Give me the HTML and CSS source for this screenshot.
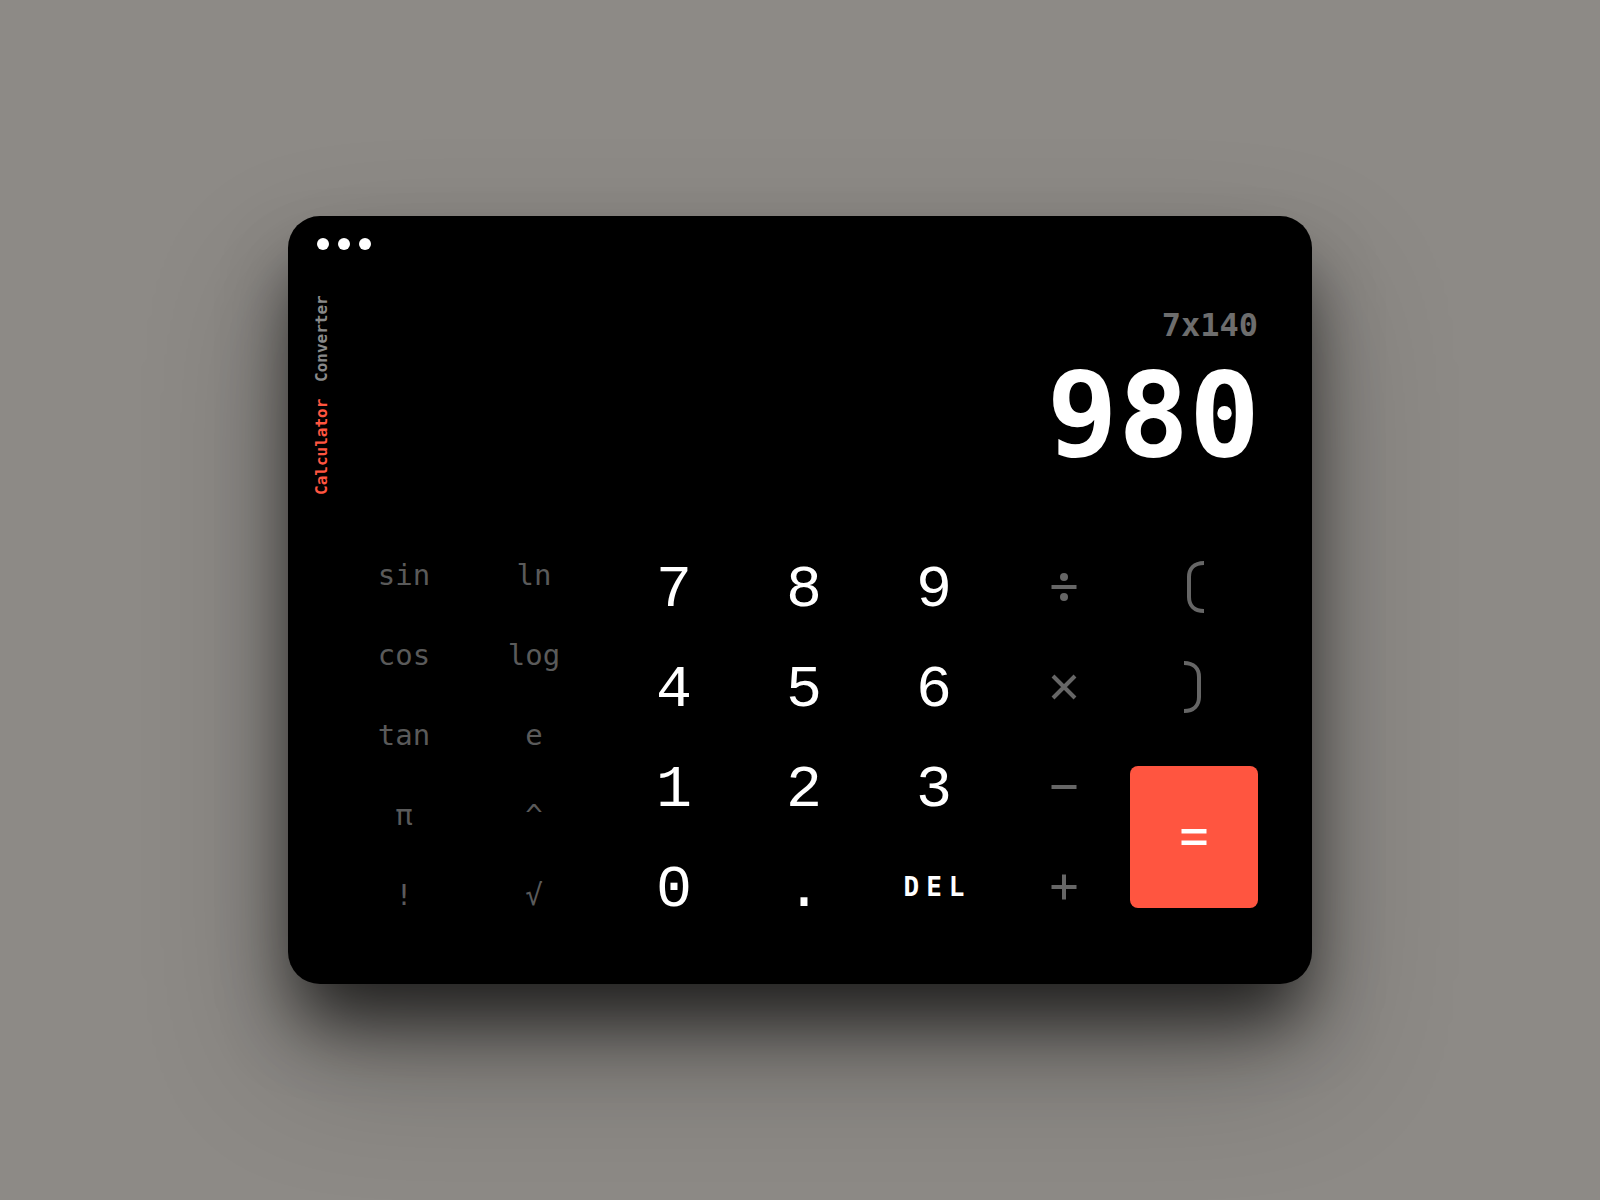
FILE: index.html
```html
<!DOCTYPE html>
<html lang="en">
<head>
<meta charset="utf-8">
<title>Calculator</title>
<link rel="stylesheet" href="styles.css">
</head>
<body>
<div class="card">
  <div class="dots"><span class="dot"></span><span class="dot"></span><span class="dot"></span></div>
  <div class="body">
    <nav class="tabs">
      <span class="tab active">Calculator</span>
      <span class="tab">Converter</span>
    </nav>
    <main class="main">
      <div class="history">7x140</div>
      <div class="result">980</div>
      <div class="keypad">
        <div class="fn">
          <div class="key">sin</div><div class="key">ln</div>
          <div class="key">cos</div><div class="key">log</div>
          <div class="key">tan</div><div class="key">e</div>
          <div class="key">π</div><div class="key">^</div>
          <div class="key">!</div><div class="key">√</div>
        </div>
        <div class="num">
          <div class="key d">7</div><div class="key d">8</div><div class="key d">9</div>
          <div class="key op"><svg width="26" height="30" viewBox="0 0 26 30"><rect x="0.5" y="13" width="25" height="4" fill="#666"/><circle cx="13" cy="5" r="4" fill="#666"/><circle cx="13" cy="25" r="4" fill="#666"/></svg></div>
          <div class="key op paren"><svg width="24" height="54" viewBox="0 0 24 54"><path d="M22 3 C12 3 7 9 7 17 V37 C7 45 12 51 22 51" fill="none" stroke="#666" stroke-width="4"/></svg></div>
          <div class="key d">4</div><div class="key d">5</div><div class="key d">6</div>
          <div class="key op"><svg width="26" height="26" viewBox="0 0 26 26"><path d="M2 2 L24 24 M24 2 L2 24" stroke="#666" stroke-width="4"/></svg></div>
          <div class="key op paren"><svg width="24" height="54" viewBox="0 0 24 54"><path d="M2 3 C12 3 17 9 17 17 V37 C17 45 12 51 2 51" fill="none" stroke="#666" stroke-width="4"/></svg></div>
          <div class="key d">1</div><div class="key d">2</div><div class="key d">3</div>
          <div class="key op"><svg width="26" height="26" viewBox="0 0 26 26"><rect x="0.5" y="11" width="25" height="4" fill="#666"/></svg></div>
          <div class="eq"><svg width="26" height="18" viewBox="0 0 26 18"><rect x="0.5" y="1" width="25" height="4.5" fill="#fff"/><rect x="0.5" y="12.5" width="25" height="4.5" fill="#fff"/></svg></div>
          <div class="key d">0</div><div class="key d">.</div><div class="key del">DEL</div>
          <div class="key op"><svg width="26" height="26" viewBox="0 0 26 26"><rect x="0.5" y="11" width="25" height="4" fill="#666"/><rect x="11" y="0.5" width="4" height="25" fill="#666"/></svg></div>
        </div>
      </div>
    </main>
  </div>
</div>
</body>
</html>
```
FILE: styles.css
```css
html, body {
  margin: 0;
  padding: 0;
}
body {
  background: #8d8a86;
  min-height: 100vh;
  display: flex;
  align-items: center;
  justify-content: center;
  font-family: "DejaVu Sans Mono", "Liberation Mono", monospace;
}
.card {
  width: 1024px;
  box-sizing: border-box;
  padding: 22px 54px 47px 26px;
  background: #000;
  border-radius: 32px;
  box-shadow: 0 45px 70px -10px rgba(0, 0, 0, 0.7), 0 70px 140px rgba(0, 0, 0, 0.28);
}
.dots {
  display: flex;
  gap: 9px;
  margin-left: 3px;
  height: 12px;
}
.dot {
  width: 12px;
  height: 12px;
  border-radius: 50%;
  background: #fff;
}
.body {
  display: flex;
  gap: 10px;
}
.tabs {
  width: 16px;
  height: 200px;
  margin-top: 45px;
  writing-mode: vertical-rl;
  transform: rotate(180deg);
  display: flex;
  justify-content: space-between;
  align-self: flex-start;
  font-size: 16px;
  line-height: 16px;
  font-weight: bold;
  color: #8a8a8a;
}
.tab.active {
  color: #ff5540;
}
.main {
  flex: 1;
  display: flex;
  flex-direction: column;
  padding-top: 59px;
}
.history {
  text-align: right;
  font-size: 32px;
  line-height: 32px;
  font-weight: bold;
  color: #6d6d6d;
}
.result {
  margin-top: 15px;
  text-align: right;
  font-size: 118px;
  line-height: 118px;
  font-weight: bold;
  color: #fff;
  margin-right: -2px;
}
.keypad {
  display: flex;
  gap: 12px;
  margin-top: 63px;
  height: 400px;
}
.fn {
  display: grid;
  grid-template-columns: repeat(2, 128px);
  grid-template-rows: repeat(5, 80px);
  column-gap: 2px;
}
.num {
  display: grid;
  grid-template-columns: repeat(5, 128px);
  grid-template-rows: repeat(4, 100px);
  column-gap: 2px;
}
.key {
  display: flex;
  align-items: center;
  justify-content: center;
}
.fn .key {
  font-size: 29px;
  line-height: 29px;
  color: #5a5a5a;
  padding-bottom: 3px;
}
.d {
  font-family: "Liberation Mono", "DejaVu Sans Mono", monospace;
  font-size: 60px;
  line-height: 60px;
  color: #fff;
  padding-top: 5px;
}
.del {
  font-size: 26px;
  line-height: 26px;
  font-weight: bold;
  color: #fff;
  letter-spacing: 7px;
  padding-left: 7px;
}
.eq {
  grid-row: span 2;
  align-self: center;
  height: 142px;
  background: #ff5540;
  border-radius: 8px;
  display: flex;
  align-items: center;
  justify-content: center;
}
```
